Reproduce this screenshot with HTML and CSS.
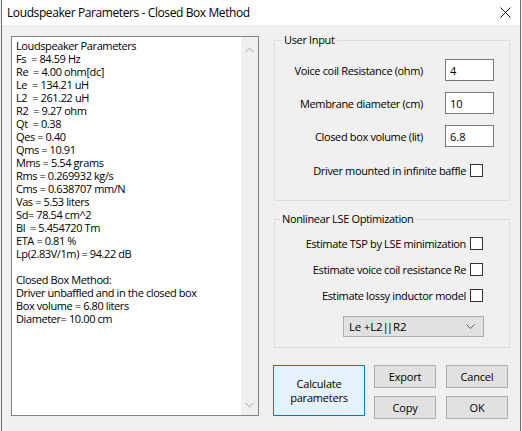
FILE: index.html
```html
<!DOCTYPE html>
<html lang="en">
  <head>
    <meta charset="utf-8" />
    <title>Loudspeaker Parameters - Closed Box Method</title>
    <link rel="stylesheet" href="styles.css">
  </head>
  <body>
    <div class="window">
      <div class="titlebar">
        <span class="title">Loudspeaker Parameters - Closed Box Method</span>
        <svg class="close" width="11" height="11" viewBox="0 0 11 11">
          <path d="M0.5 0.5 L10.5 10.5 M10.5 0.5 L0.5 10.5" stroke="#111" stroke-width="1" fill="none" />
        </svg>
      </div>

      <div class="client">
        <div class="results">
<pre class="results-text">Loudspeaker Parameters
Fs  = 84.59 Hz
Re  = 4.00 ohm[dc]
Le  = 134.21 uH
L2  = 261.22 uH
R2  = 9.27 ohm
Qt  = 0.38
Qes = 0.40
Qms = 10.91
Mms = 5.54 grams
Rms = 0.269932 kg/s
Cms = 0.638707 mm/N
Vas = 5.53 liters
Sd= 78.54 cm^2
Bl  = 5.454720 Tm
ETA = 0.81 %
Lp(2.83V/1m) = 94.22 dB

Closed Box Method:
Driver unbaffled and in the closed box
Box volume = 6.80 liters
Diameter= 10.00 cm</pre>
          <div class="scrollbar">
            <svg width="9" height="6" viewBox="0 0 9 6">
              <path d="M0.5 5 L4.5 1 L8.5 5" stroke="#c2c2c2" stroke-width="1.2" fill="none" />
            </svg>
            <svg width="9" height="6" viewBox="0 0 9 6">
              <path d="M0.5 1 L4.5 5 L8.5 1" stroke="#c2c2c2" stroke-width="1.2" fill="none" />
            </svg>
          </div>
        </div>

        <div class="side">
          <fieldset class="group user-input">
            <legend>User Input</legend>
            <div class="field">
              <label>Voice coil Resistance (ohm)</label>
              <input type="text" class="edit" value="4" />
            </div>
            <div class="field">
              <label>Membrane diameter (cm)</label>
              <input type="text" class="edit" value="10" />
            </div>
            <div class="field">
              <label>Closed box volume (lit)</label>
              <input type="text" class="edit" value="6.8" />
            </div>
            <div class="check-row baffle">
              <span>Driver mounted in infinite baffle</span>
              <span class="check"></span>
            </div>
          </fieldset>

          <fieldset class="group lse">
            <legend>Nonlinear LSE Optimization</legend>
            <div class="check-row first">
              <span>Estimate TSP by LSE minimization</span>
              <span class="check"></span>
            </div>
            <div class="check-row">
              <span>Estimate voice coil resistance Re</span>
              <span class="check"></span>
            </div>
            <div class="check-row">
              <span>Estimate lossy inductor model</span>
              <span class="check"></span>
            </div>
            <div class="combo">
              <span>Le +L2<span class="pipes">||</span>R2</span>
              <svg width="9" height="5" viewBox="0 0 9 5">
                <path d="M0.5 0.5 L4.5 4.5 L8.5 0.5" stroke="#555" stroke-width="1" fill="none" />
              </svg>
            </div>
          </fieldset>

          <div class="buttons">
            <button type="button" class="btn btn-default">Calculate<br />parameters</button>
            <div class="btn-grid">
              <button type="button" class="btn">Export</button>
              <button type="button" class="btn">Cancel</button>
              <button type="button" class="btn">Copy</button>
              <button type="button" class="btn">OK</button>
            </div>
          </div>
        </div>
      </div>
    </div>
  </body>
</html>
```

FILE: styles.css
```css
body {
  margin: 0;
  background-color: #f0f0f0;
  font-family: "Open Sans", "Noto Sans", sans-serif;
  font-size: 11px;
  letter-spacing: -0.35px;
  color: #000;
}

.window {
  margin-left: 1px;
  width: 518px;
  height: 431px;
  border-left: 1px solid #707070;
  border-right: 1px solid #707070;
  background-color: #f0f0f0;
}

.titlebar {
  height: 25px;
  background-color: #fff;
  display: flex;
  align-items: center;
  justify-content: space-between;
  padding: 0 9px 0 5px;
}

.title {
  font-size: 12px;
  letter-spacing: -0.4px;
}

.close {
  margin-top: -1px;
}

.client {
  display: flex;
  padding: 8px 10px 0 9px;
}

.results {
  margin-top: 3px;
  width: 248px;
  height: 380px;
  box-sizing: border-box;
  border: 1px solid #828282;
  background-color: #fff;
  display: flex;
}

.results-text {
  flex: 1;
  margin: 0;
  padding: 2px 4px;
  font-family: "Open Sans", "Noto Sans", sans-serif;
  font-size: 11px;
  letter-spacing: -0.4px;
  line-height: 13px;
  white-space: pre;
  overflow: hidden;
}

.scrollbar {
  width: 17px;
  background-color: #f0f0f0;
  display: flex;
  flex-direction: column;
  justify-content: space-between;
  align-items: center;
  padding: 10px 0 7px;
}

.side {
  margin-left: 15px;
  width: 236px;
}

.group {
  margin: 0;
  padding: 0;
  border: 1px solid #dcdcdc;
  min-width: 0;
}

.group legend {
  margin-left: 7px;
  padding: 0 2px;
  line-height: 14px;
  font-size: 11px;
}

.lse legend {
  margin-left: 5px;
}

.user-input {
  padding: 12px 15px 22px 0;
}

.field {
  display: flex;
  justify-content: flex-end;
  align-items: center;
  height: 22px;
}

.field + .field {
  margin-top: 11px;
}

.field label {
  margin-right: 22px;
}

.edit {
  width: 49px;
  height: 22px;
  box-sizing: border-box;
  border: 1px solid #7a7a7a;
  padding: 0 4px;
  font-family: "Open Sans", "Noto Sans", sans-serif;
  font-size: 11px;
  outline: none;
}

.check-row {
  display: flex;
  justify-content: flex-end;
  align-items: center;
  height: 15px;
  margin-top: 11px;
  margin-right: 11px;
}

.check-row.baffle {
  margin-top: 16px;
}

.check-row.first {
  margin-top: 10px;
}

.check {
  width: 13px;
  height: 13px;
  box-sizing: border-box;
  border: 1px solid #333;
  background-color: #fff;
  margin-left: 4px;
}

.lse {
  margin-top: 11px;
  padding: 0 25px 10px 0;
}

.lse .check-row {
  margin-right: 1px;
}

.combo {
  margin: 13px 0 0 auto;
  width: 141px;
  height: 21px;
  box-sizing: border-box;
  border: 1px solid #adadad;
  background-color: #e1e1e1;
  display: flex;
  align-items: center;
  justify-content: space-between;
  padding: 0 8px 0 5px;
  font-size: 11.5px;
  letter-spacing: -0.2px;
}

.pipes {
  letter-spacing: -2px;
  margin-right: 2px;
}

.buttons {
  display: flex;
  margin: 17px 0 0 -1px;
  gap: 9px;
}

.btn {
  background-color: #e1e1e1;
  border: 1px solid #adadad;
  font-family: "Open Sans", "Noto Sans", sans-serif;
  font-size: 11px;
  letter-spacing: -0.2px;
  color: #000;
  padding: 0;
  cursor: pointer;
}

.btn-default {
  width: 92px;
  height: 51px;
  background-color: #e5f1fb;
  border-color: #0078d7;
  line-height: 14px;
}

.btn-grid {
  display: grid;
  grid-template-columns: 62px 62px;
  grid-auto-rows: 23px;
  gap: 8px 10px;
}
```
